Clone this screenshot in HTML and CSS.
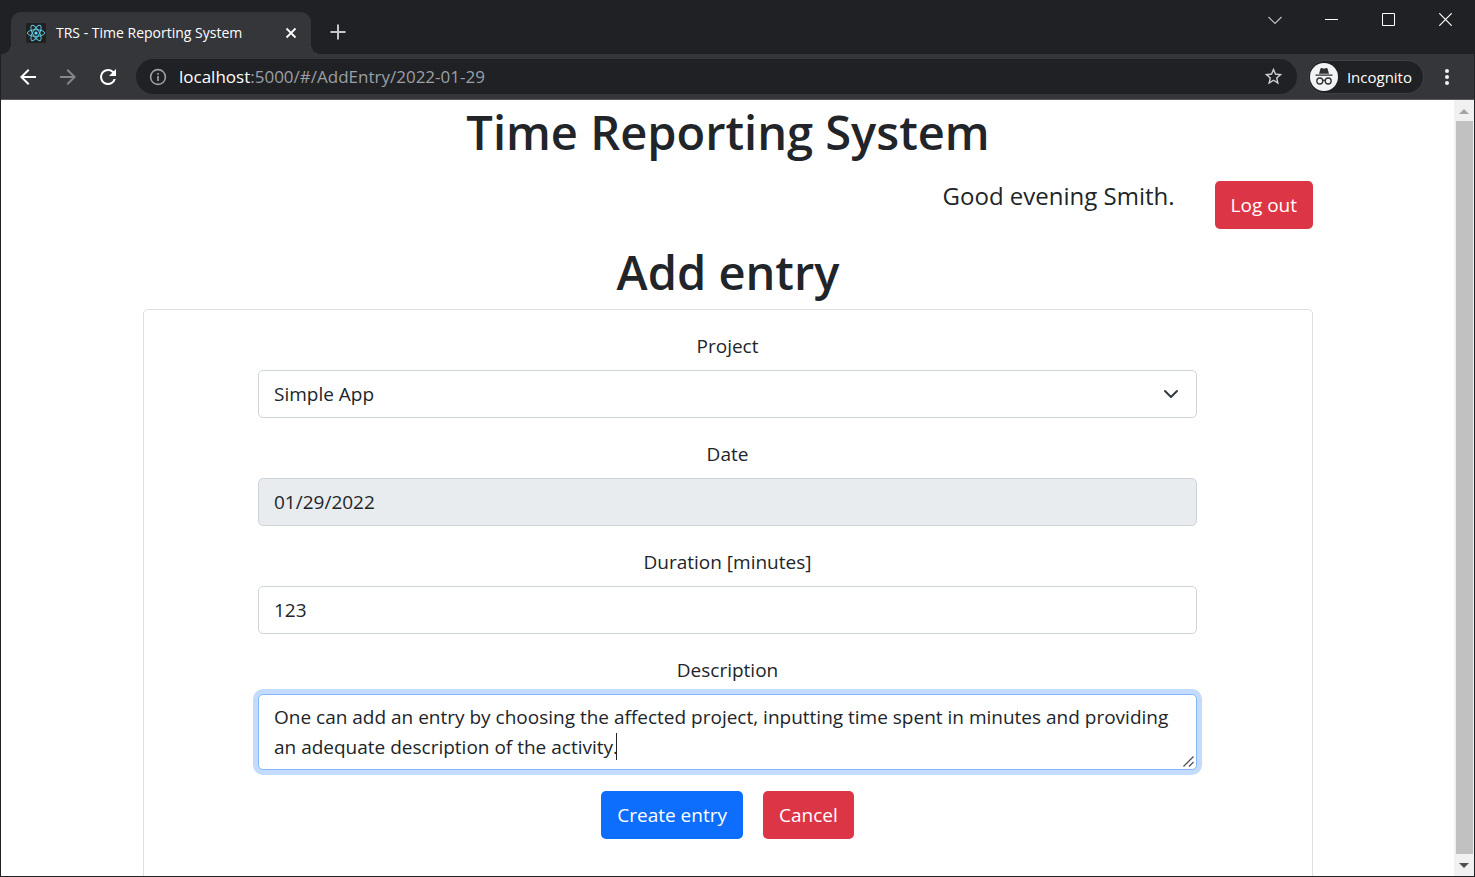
FILE: index.html
```html
<!DOCTYPE html>
<html lang="en">
<head>
<meta charset="utf-8">
<title>TRS - Time Reporting System</title>
<link rel="stylesheet" href="styles.css">
</head>
<body>
<div class="window">
  <header class="tabstrip">
    <div class="tab">
      <svg class="favicon" viewBox="0 0 20 20" width="20" height="20" aria-hidden="true">
        <rect width="20" height="20" rx="1" fill="#212121"/>
        <g fill="none" stroke="#5cc5e0" stroke-width="1">
          <ellipse cx="10" cy="10" rx="8.6" ry="3.3"/>
          <ellipse cx="10" cy="10" rx="8.6" ry="3.3" transform="rotate(60 10 10)"/>
          <ellipse cx="10" cy="10" rx="8.6" ry="3.3" transform="rotate(120 10 10)"/>
        </g>
        <circle cx="10" cy="10" r="1.6" fill="#61dafb"/>
      </svg>
      <span class="tab-title">TRS - Time Reporting System</span>
      <button class="icon-btn tab-close" aria-label="Close tab"><svg width="12" height="12" viewBox="0 0 12 12"><path d="M1.5 1.5l9 9m0-9l-9 9" stroke="#fff" stroke-width="1.8"/></svg></button>
    </div>
    <button class="icon-btn new-tab" aria-label="New tab"><svg width="16" height="16" viewBox="0 0 16 16"><path d="M8 .5v15M.5 8h15" stroke="#c6c7c9" stroke-width="2"/></svg></button>
    <div class="window-controls">
      <button class="icon-btn control" aria-label="Search tabs"><svg width="14" height="14" viewBox="0 0 14 14"><path d="M.5 4L7 10.500 13.500 4" fill="none" stroke="#c4c4c6" stroke-width="1.1"/></svg></button>
      <button class="icon-btn control" aria-label="Minimize"><svg width="13" height="13" viewBox="0 0 13 13"><path d="M0 6.500h13" stroke="#fff"/></svg></button>
      <button class="icon-btn control" aria-label="Maximize"><svg width="13" height="13" viewBox="0 0 13 13"><path d="M.5.5h12v12H.5z" fill="none" stroke="#fff"/></svg></button>
      <button class="icon-btn control" aria-label="Close"><svg width="13" height="13" viewBox="0 0 13 13"><path d="M.3.3l12.400 12.400m0-12.400L.3 12.700" stroke="#fff" stroke-width="1.200"/></svg></button>
    </div>
  </header>

  <nav class="toolbar">
    <button class="icon-btn nav-btn" aria-label="Back"><svg width="24" height="24" viewBox="0 0 24 24"><path d="M20 11H7.830l5.590-5.590L12 4l-8 8 8 8 1.410-1.410L7.830 13H20z" fill="#fff"/></svg></button>
    <button class="icon-btn nav-btn" aria-label="Forward"><svg width="24" height="24" viewBox="0 0 24 24"><path d="M4 11h12.170l-5.590-5.590L12 4l8 8-8 8-1.410-1.410L16.170 13H4z" fill="#85868a"/></svg></button>
    <button class="icon-btn nav-btn" aria-label="Reload"><svg width="24" height="24" viewBox="0 0 24 24"><path d="M17.650 6.350A7.950 7.950 0 0 0 12 4a8 8 0 1 0 7.730 10h-2.080A6 6 0 1 1 12 6c1.660 0 3.140.69 4.220 1.780L13 11h7V4z" fill="#fff"/></svg></button>
    <div class="omnibox">
      <svg width="18" height="18" viewBox="0 0 18 18" aria-hidden="true"><circle cx="9" cy="9" r="7.400" fill="none" stroke="#9aa0a6" stroke-width="1.600"/><path d="M9 8v5M9 5v1.800" stroke="#9aa0a6" stroke-width="1.700"/></svg>
      <span class="url"><span class="host">localhost</span>:5000/#/AddEntry/2022-01-29</span>
      <button class="icon-btn" aria-label="Bookmark this tab"><svg width="21" height="21" viewBox="0 0 24 24"><path d="M22 9.240l-7.190-.62L12 2 9.190 8.630 2 9.240l5.460 4.730L5.820 21 12 17.270 18.180 21l-1.630-7.030zM12 15.400l-3.760 2.270 1-4.280-3.320-2.880 4.380-.38L12 6.100l1.710 4.040 4.380.38-3.320 2.880 1 4.280z" fill="#d0d1d3"/></svg></button>
    </div>
    <button class="incognito">
      <svg width="28" height="28" viewBox="0 0 28 28" aria-hidden="true">
        <circle cx="14" cy="14" r="14" fill="#f1f3f4"/>
        <path d="M10.500 5.500Q11 4.900 11.800 5.100L14 5.700l2.200-.6q.8-.2 1.300.4l1.500 5.300H9zM5.500 11.500h17v1.300h-17z" fill="#303134"/>
        <g fill="none" stroke="#303134" stroke-width="1.300"><circle cx="9.800" cy="18" r="3"/><circle cx="18.200" cy="18" r="3"/><path d="M12.700 17.600q1.300-.8 2.600 0"/></g>
      </svg>
      <span>Incognito</span>
    </button>
    <button class="icon-btn menu-btn" aria-label="Menu"><svg width="6" height="18" viewBox="0 0 6 18"><g fill="#f1f3f4"><circle cx="3" cy="3" r="2"/><circle cx="3" cy="9" r="2"/><circle cx="3" cy="15" r="2"/></g></svg></button>
  </nav>

  <div class="viewport">
    <main class="page">
      <h1 class="title">Time Reporting System</h1>
      <div class="userbar">
        <span class="greeting">Good evening Smith.</span>
        <button class="btn btn-danger">Log out</button>
      </div>
      <h1 class="title">Add entry</h1>
      <form class="card">
        <div class="field">
          <label for="project">Project</label>
          <div class="select-wrap">
            <select id="project" class="control-input"><option>Simple App</option></select>
            <svg class="chevron" width="16" height="16" viewBox="0 0 16 16" aria-hidden="true"><path d="M2 5l6 6 6-6" fill="none" stroke="#343a40" stroke-width="2" stroke-linecap="round" stroke-linejoin="round"/></svg>
          </div>
        </div>
        <div class="field">
          <label for="date">Date</label>
          <input id="date" class="control-input" type="text" value="01/29/2022" disabled>
        </div>
        <div class="field">
          <label for="duration">Duration [minutes]</label>
          <input id="duration" class="control-input" type="text" value="123">
        </div>
        <div class="field">
          <label for="description">Description</label>
          <div class="text-wrap">
            <textarea id="description" class="control-input active" rows="2">One can add an entry by choosing the affected project, inputting time spent in minutes and providing an adequate description of the activity.</textarea>
            <span class="caret"></span>
            <svg class="grip" width="11" height="11" viewBox="0 0 11 11" aria-hidden="true"><path d="M.5 10.500l10-10M6 10.500L10.500 6" stroke="#505050" stroke-width="1.300"/></svg>
          </div>
        </div>
        <div class="actions">
          <button type="button" class="btn btn-primary">Create entry</button>
          <button type="button" class="btn btn-danger">Cancel</button>
        </div>
      </form>
    </main>
    <div class="scrollbar" aria-hidden="true">
      <svg width="19" height="21" viewBox="0 0 19 21"><path d="M5 14l5-5 5 5z" fill="#a3a3a3"/></svg>
      <div class="thumb"></div>
      <svg width="19" height="22" viewBox="0 0 19 22"><path d="M5 9l5 5 5-5z" fill="#505050"/></svg>
    </div>
  </div>
</div>
</body>
</html>
```

FILE: styles.css
```css
* { box-sizing: border-box; }

body {
  margin: 0;
  font-family: "Open Sans", "Noto Sans", sans-serif;
  font-size: 19px;
  line-height: 30px;
  color: #212529;
}

button, input, select, textarea { font: inherit; color: inherit; }

.window {
  display: flex;
  flex-direction: column;
  height: 100vh;
  border: 1px solid #202124;
  overflow: hidden;
}

.icon-btn {
  display: flex;
  align-items: center;
  justify-content: center;
  padding: 0;
  border: 0;
  background: none;
}

.tabstrip {
  display: flex;
  flex: none;
  height: 53px;
  padding-left: 10px;
  background: #202124;
}

.tab {
  position: relative;
  display: flex;
  align-items: center;
  gap: 10px;
  width: 300px;
  margin-top: 11px;
  padding: 0 12px 0 15px;
  border-radius: 10px 10px 0 0;
  background: #35363a;
  color: #fff;
  font-size: 14px;
}

.tab::before,
.tab::after {
  content: "";
  position: absolute;
  bottom: 0;
  width: 10px;
  height: 10px;
}

.tab::before {
  right: 100%;
  background: radial-gradient(circle at 0 0, transparent 10px, #35363a 10px);
}

.tab::after {
  left: 100%;
  background: radial-gradient(circle at 100% 0, transparent 10px, #35363a 10px);
}

.tab-title { flex: 1; white-space: nowrap; }
.tab-close { width: 16px; height: 16px; }
.new-tab { width: 36px; height: 36px; margin: 13px 0 0 9px; }
.window-controls { display: flex; margin-left: auto; }
.control { width: 57px; height: 37px; }

.toolbar {
  display: flex;
  flex: none;
  align-items: center;
  height: 46px;
  padding: 0 15px;
  border-bottom: 1px solid #5a5b5f;
  background: #35363a;
}

.nav-btn { width: 24px; height: 24px; margin-right: 16px; }

.omnibox {
  display: flex;
  flex: 1;
  align-items: center;
  gap: 12px;
  height: 35px;
  padding: 0 13px;
  border-radius: 18px;
  background: #202124;
}

.url { flex: 1; color: #9aa0a6; font-size: 17px; }
.host { color: #fff; }

.incognito {
  display: flex;
  align-items: center;
  gap: 9px;
  height: 34px;
  margin-left: 11px;
  padding: 0 11px 0 1px;
  border: 1px solid #3f4044;
  border-radius: 17px;
  background: #202124;
  color: #fff;
  font-size: 15px;
}

.menu-btn { width: 24px; height: 24px; margin: 0 0 0 11px; }

.viewport {
  display: flex;
  flex: 1;
  min-height: 0;
  background: #fff;
}

.page {
  flex: 1;
  min-width: 0;
  display: flex;
  flex-direction: column;
  padding: 0 141px 0 142px;
}

.title {
  margin: 0 0 5px;
  font-size: 47px;
  line-height: 64px;
  font-weight: 600;
  text-align: center;
}

.userbar {
  display: flex;
  align-items: flex-start;
  justify-content: flex-end;
  gap: 40px;
  padding: 12px 0 11px;
}

.greeting { font-size: 24px; }

.btn {
  height: 48px;
  padding: 0 16px;
  border: 0;
  border-radius: 5px;
  color: #fff;
}

.btn-danger { background: #dc3545; }
.btn-primary { background: #0d6efd; }

.card {
  flex: 1 0 auto;
  padding: 21px 115px 21px 114px;
  border: 1px solid #dfdfdf;
  border-bottom: 0;
  border-radius: 5px 5px 0 0;
}

.field {
  display: flex;
  flex-direction: column;
  gap: 9px;
  margin-bottom: 21px;
  text-align: center;
}

.control-input {
  display: block;
  width: 100%;
  height: 48px;
  padding: 0 15px;
  border: 1px solid #ced4da;
  border-radius: 5px;
  outline: 0;
  background: #fff;
}

.control-input:disabled { background: #e9ecef; }

.select-wrap, .text-wrap { position: relative; }
select.control-input { appearance: none; }

.chevron {
  position: absolute;
  top: 16px;
  right: 18px;
  pointer-events: none;
}

textarea.control-input {
  height: 76px;
  padding: 7px 15px;
  resize: none;
  overflow: hidden;
}

.active {
  border-color: #86b7fe;
  box-shadow: 0 0 0 5px #c2dbfe;
}

.caret {
  position: absolute;
  top: 39px;
  left: 358px;
  width: 1px;
  height: 27px;
  background: #212529;
}

.grip {
  position: absolute;
  right: 3px;
  bottom: 3px;
}

.actions {
  display: flex;
  justify-content: center;
  gap: 20px;
}

.scrollbar {
  display: flex;
  flex: none;
  flex-direction: column;
  width: 20px;
  background: #f1f1f1;
}

.thumb {
  flex: 1;
  margin: 0 1px 0 2px;
  background: #c1c1c1;
}
```
